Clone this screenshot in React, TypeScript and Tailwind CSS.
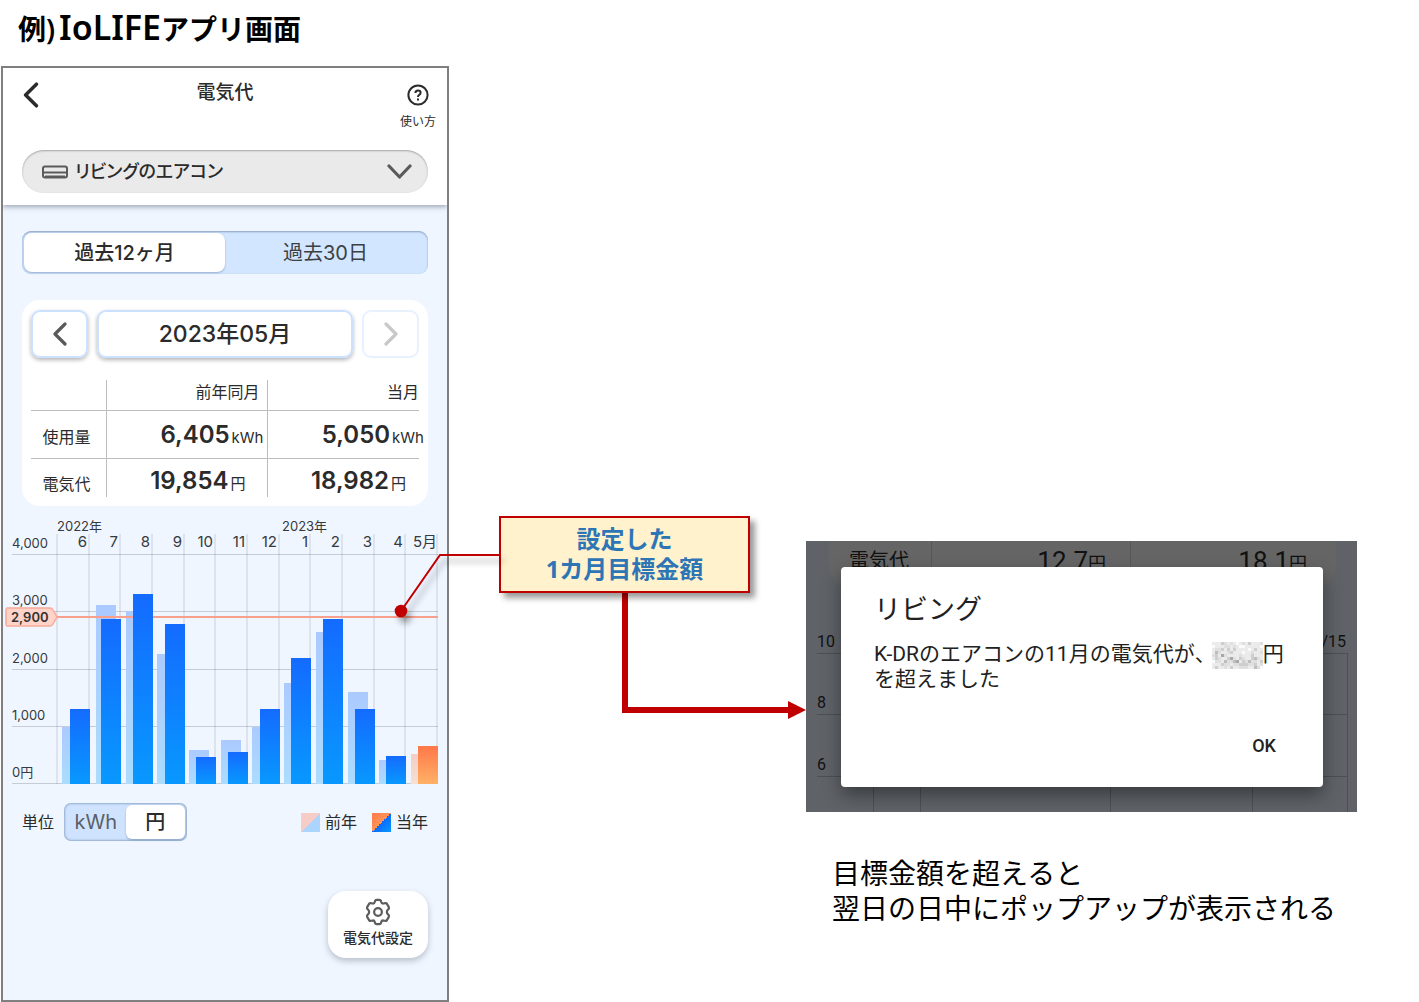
import React from "react";

const BAR_W = 20;

const months = [
  { label: "6", prev: 727, cur: 709, px: 62 },
  { label: "7", prev: 605, cur: 619, px: 96 },
  { label: "8", prev: 611, cur: 594, px: 126 },
  { label: "9", prev: 654, cur: 624, px: 157 },
  { label: "10", prev: 750, cur: 757, px: 189 },
  { label: "11", prev: 740, cur: 752, px: 221 },
  { label: "12", prev: 727, cur: 709, px: 252 },
  { label: "1", prev: 683, cur: 658, px: 284 },
  { label: "2", prev: 632, cur: 619, px: 316 },
  { label: "3", prev: 692, cur: 709, px: 348 },
  { label: "4", prev: 760, cur: 756, px: 379 },
  { label: "5月", prev: 754, cur: 746, px: 411 },
];

const gridX = (i: number) => Math.round(57 + (i * 380) / 12);

const levels = [
  { y: 554, label: "4,000" },
  { y: 611, label: "3,000" },
  { y: 669, label: "2,000" },
  { y: 726, label: "1,000" },
  { y: 783, label: "0円" },
];

function Chart() {
  return (
    <svg viewBox="3 510 444 284" className="block w-full" role="img" aria-label="電気代グラフ">
      <defs>
        <linearGradient id="cur" x1="0" y1="0" x2="0" y2="1">
          <stop offset="0" stopColor="#146bff" />
          <stop offset="1" stopColor="#0898fe" />
        </linearGradient>
        <linearGradient id="prev" x1="0" y1="0" x2="0" y2="1">
          <stop offset="0" stopColor="#abcaff" />
          <stop offset="1" stopColor="#abdcff" />
        </linearGradient>
        <linearGradient id="curHot" x1="0" y1="0" x2="0" y2="1">
          <stop offset="0" stopColor="#ff7849" />
          <stop offset="1" stopColor="#ffb167" />
        </linearGradient>
        <linearGradient id="prevHot" x1="0" y1="0" x2="0" y2="1">
          <stop offset="0" stopColor="#f5cdc6" />
          <stop offset="1" stopColor="#f4e1d2" />
        </linearGradient>
      </defs>
      <g fill="#36393d" fontSize="13">
        <text x="57" y="531">2022年</text>
        <text x="282" y="531">2023年</text>
      </g>
      {Array.from({ length: 13 }, (_, i) => (
        <rect key={i} x={gridX(i) - 1} y="534" width="2" height="250" fill="#202830" fillOpacity="0.09" />
      ))}
      {levels.map((l) => (
        <g key={l.label}>
          <rect x="12" y={l.y} width="426" height="1" fill="#202830" fillOpacity="0.2" />
          <text x="12" y={l.y - 6} fontSize="13" fill="#36393d">
            {l.label}
          </text>
        </g>
      ))}
      {months.map((m, i) => {
        const hot = i === months.length - 1;
        return (
          <g key={m.label}>
            <text x={hot ? 437 : gridX(i + 1) - 2} y="547" fontSize="15" textAnchor="end" fill="#36393d">
              {m.label}
            </text>
            <rect x={m.px} y={m.prev} width={BAR_W} height={784 - m.prev} fill={hot ? "url(#prevHot)" : "url(#prev)"} />
          </g>
        );
      })}
      <rect x="57" y="616" width="381" height="2" fill="#f9a08c" />
      {months.map((m, i) => {
        const hot = i === months.length - 1;
        return (
          <rect
            key={m.label}
            x={gridX(i + 1) + 1 - BAR_W}
            y={m.cur}
            width={BAR_W}
            height={784 - m.cur}
            fill={hot ? "url(#curHot)" : "url(#cur)"}
          />
        );
      })}
      <path d="M7 608 H50 Q52 608 53 610 L57 617 L53 624 Q52 626 50 626 H7 Q6 626 6 624 V610 Q6 608 7 608Z" fill="#ffd3c8" stroke="#f7ab98" strokeWidth="1.5" />
      <text x="11" y="622" fontSize="13" fontWeight="600" fill="#333">
        2,900
      </text>
    </svg>
  );
}

function Gear() {
  return (
    <svg viewBox="0 0 24 24" className="h-7 w-7" fill="none" stroke="#5c5c5c" strokeWidth="1.9" strokeLinejoin="round" strokeLinecap="round">
      <path d="M9.2 3.4 Q9.6 1.6 10.8 1.6 H13.2 Q14.4 1.6 14.8 3.4 Q15.2 4.9 16.6 4.7 Q18.8 4 19.5 4.8 L21.3 7.8 Q21.8 8.9 20.6 9.9 Q19.6 10.8 19.6 12 Q19.6 13.2 20.6 14.1 Q21.8 15.1 21.3 16.2 L19.5 19.2 Q18.8 20 16.6 19.3 Q15.2 19.1 14.8 20.6 Q14.4 22.4 13.2 22.4 H10.8 Q9.6 22.4 9.2 20.6 Q8.8 19.1 7.4 19.3 Q5.2 20 4.5 19.2 L2.7 16.2 Q2.2 15.1 3.4 14.1 Q4.4 13.2 4.4 12 Q4.4 10.8 3.4 9.9 Q2.2 8.9 2.7 7.8 L4.5 4.8 Q5.2 4 7.4 4.7 Q8.8 4.9 9.2 3.4Z" />
      <circle cx="12" cy="12" r="3.3" />
    </svg>
  );
}

function Chevron({ d, color, className }: { d: string; color: string; className: string }) {
  return (
    <svg viewBox="0 0 24 24" className={className} fill="none" stroke={color} strokeWidth="3.2" strokeLinecap="round" strokeLinejoin="round">
      <path d={d} />
    </svg>
  );
}

const LEFT = "M17 2 L7 12 L17 22";
const RIGHT = "M7 2 L17 12 L7 22";

function Value({ n, unit }: { n: string; unit: string }) {
  return (
    <>
      <span className="text-2xl leading-7 font-semibold">{n}</span>
      <span className="ml-[2px] text-[15px] leading-5">{unit}</span>
    </>
  );
}

function Phone() {
  return (
    <section className="flex flex-col overflow-hidden border-2 border-[#7f7f7f] bg-[#eff6ff] font-['Inter','Noto_Sans_CJK_JP',sans-serif] text-[#2b2b2b]">
      <header className="bg-white px-[19px] pb-3 shadow-[0_2px_5px_rgba(80,90,110,0.5)]">
        <div className="-mx-[14px] flex h-[82px] items-start justify-between">
          <button aria-label="戻る" className="mt-[14px] w-12">
            <Chevron d={LEFT} color="#2b2b2b" className="ml-[10px] h-[26px] w-[26px]" />
          </button>
          <h2 className="mt-[11px] text-[19px] leading-7 font-medium">電気代</h2>
          <button className="mt-4 flex w-12 flex-col items-center">
            <svg viewBox="0 0 22 22" className="h-[22px] w-[22px]" fill="none" stroke="#2b2b2b" strokeWidth="2">
              <circle cx="11" cy="11" r="9.6" />
              <path d="M8.4 9 Q8.4 6.4 11 6.4 Q13.6 6.4 13.6 8.7 Q13.6 10 12.2 10.8 Q11 11.5 11 12.9" />
              <path d="M11 14.4 V16.4" />
            </svg>
            <span className="mt-[6px] text-xs leading-5">使い方</span>
          </button>
        </div>
        <button className="flex h-[43px] w-full items-center rounded-full bg-[#eaeaea] pr-4 pl-5 shadow-[inset_0_1px_2px_rgba(0,0,0,0.3)]">
          <svg viewBox="0 0 26 14" className="h-[14px] w-[26px]" fill="none" stroke="#5a5a5a" strokeWidth="2">
            <rect x="1" y="1.5" width="24" height="11" rx="2" />
            <path d="M1.5 7.5 H24.5" />
            <path d="M3 11.5 H23" />
          </svg>
          <span className="ml-[7px] text-lg leading-6 font-medium [font-feature-settings:'palt']">リビングのエアコン</span>
          <svg viewBox="0 0 25 16" className="ml-auto h-4 w-[25px]" fill="none" stroke="#5a5a5a" strokeWidth="3.2" strokeLinecap="round" strokeLinejoin="round">
            <path d="M2 2 L12.5 13 L23 2" />
          </svg>
        </button>
      </header>

      <div className="px-[19px] pt-[26px]">
        <div className="flex h-[43px] rounded-[9px] bg-[#d3e6ff] p-[2px] text-xl shadow-[inset_0_1px_2px_rgba(60,90,130,0.5)]">
          <button className="flex-1 rounded-lg bg-white font-medium shadow-[0_1px_2px_rgba(60,90,130,0.4)]">過去12ヶ月</button>
          <button className="flex-1 text-[#3c4043]">過去30日</button>
        </div>

        <div className="mt-[26px] rounded-[18px] bg-white px-[9px] pt-[10px] pb-[9px]">
          <div className="flex h-12 gap-[9px]">
            <button aria-label="前の月" className="flex w-[57px] items-center justify-center rounded-[9px] border-2 border-[#cbe1ff] shadow-[0_2px_4px_rgba(0,0,0,0.3)]">
              <Chevron d={LEFT} color="#5a5a5a" className="h-6 w-6" />
            </button>
            <button className="flex-1 rounded-[9px] border-2 border-[#cbe1ff] text-[23px] font-medium shadow-[0_2px_4px_rgba(0,0,0,0.3)]">2023年05月</button>
            <button aria-label="次の月" className="flex w-[57px] items-center justify-center rounded-[9px] border-2 border-[#e8f2ff]">
              <Chevron d={RIGHT} color="#c8c8c8" className="h-6 w-6" />
            </button>
          </div>
          <table className="mt-[22px] w-full table-fixed border-collapse text-right">
            <colgroup>
              <col className="w-[75px]" />
              <col />
              <col className="w-[152px]" />
            </colgroup>
            <tbody>
              <tr className="h-[30px] border-b border-[#bdbdbd] text-base">
                <td className="border-r border-[#bdbdbd]" />
                <th scope="col" className="border-r border-[#bdbdbd] pr-[7px] pb-[6px] leading-6 font-normal">前年同月</th>
                <th scope="col" className="pb-[6px] leading-6 font-normal">当月</th>
              </tr>
              <tr className="h-12 border-b border-[#bdbdbd]">
                <th scope="row" className="border-r border-[#bdbdbd] pt-1 pr-[15px] text-base font-normal">使用量</th>
                <td className="border-r border-[#bdbdbd] pr-[3px]"><Value n="6,405" unit="kWh" /></td>
                <td><div className="-mr-[5px]"><Value n="5,050" unit="kWh" /></div></td>
              </tr>
              <tr className="h-[38px]">
                <th scope="row" className="border-r border-[#bdbdbd] pt-3 pr-[15px] text-base leading-6 font-normal">電気代</th>
                <td className="border-r border-[#bdbdbd] pt-2 pr-[21px] leading-7"><Value n="19,854" unit="円" /></td>
                <td className="pt-2 pr-[13px] leading-7"><Value n="18,982" unit="円" /></td>
              </tr>
            </tbody>
          </table>
        </div>
      </div>

      <div className="mt-1">
        <Chart />
      </div>

      <div className="mt-[9px] flex items-center px-[19px] text-base">
        <span>単位</span>
        <div className="ml-[10px] flex h-[38px] w-[123px] rounded-[7px] bg-[#cfe3ff] p-[2px] text-xl shadow-[inset_0_0_2px_1px_rgba(60,90,130,0.4)]">
          <button className="flex-1 text-[#5a5f66]">kWh</button>
          <button className="flex-1 rounded-md bg-white font-medium shadow-[0_1px_2px_rgba(60,90,130,0.4)]">円</button>
        </div>
        <span className="ml-auto h-[19px] w-[19px] bg-[linear-gradient(135deg,#f5cdc6_50%,#abd5ff_50%)]" />
        <span className="ml-[5px]">前年</span>
        <span className="ml-[15px] h-[19px] w-[19px] bg-[linear-gradient(135deg,#ff7849_0%,#ff9558_50%,#0a6cff_50%,#0898fe_100%)]" />
        <span className="ml-[5px]">当年</span>
      </div>

      <button className="mt-[50px] mr-[19px] mb-[42px] ml-auto flex h-[67px] w-[100px] flex-col items-center rounded-[18px] bg-white pt-[7px] text-sm leading-6 font-medium shadow-[0_3px_6px_rgba(80,90,110,0.35)]">
        <Gear />
        電気代設定
      </button>
    </section>
  );
}

function Callout() {
  return (
    <div className="relative ml-[50px] w-[251px] border-2 border-[#c00000] bg-[#fff2cc] pt-[6px] pb-[7px] text-center text-2xl leading-[30px] font-bold text-[#2e75b6] shadow-[5px_5px_6px_rgba(0,0,0,0.4)]">
      設定した
      <br />
      1カ月目標金額
      <svg viewBox="391 540 110 90" className="absolute top-[22px] right-full h-[90px] w-[110px] drop-shadow-[4px_6px_3px_rgba(0,0,0,0.35)]">
        <path d="M500 555 H440 L401 611" fill="none" stroke="#c00000" strokeWidth="2" />
        <circle cx="401" cy="611" r="6.3" fill="#c00000" />
      </svg>
    </div>
  );
}

const MOSAIC = [
  "EEECDEDEFEDECEEED",
  "FEEEDDEDEFFEEEEEF",
  "EDDCECECEEEEFECEE",
  "EBDEEDCEEEFEEDEED",
  "DCEADEEEEDEEECEEE",
  "ECDEECADECDEECBDE",
  "FDDEBDDBAECDBDDEC",
  "EEECDDEDDCCCDDCED",
  "ECEEDECEEDDDEEBDF",
];
const SHADES: Record<string, string> = { A: "#a8a8a8", B: "#bdbdbd", C: "#cecece", D: "#dfdfdf", E: "#ebebeb", F: "#fafafa" };

function Mosaic() {
  return (
    <svg viewBox="0 0 51 27" className="-my-1 inline-block h-[27px] w-[51px] align-middle" shapeRendering="crispEdges">
      {MOSAIC.flatMap((row, y) => row.split("").map((c, x) => <rect key={`${x}-${y}`} x={x * 3} y={y * 3} width="3" height="3" fill={SHADES[c]} />))}
    </svg>
  );
}

function Popup() {
  return (
    <div className="relative h-[271px] overflow-hidden bg-[#5f6368] font-['Roboto','Noto_Sans_CJK_JP',sans-serif]">
      <div className="mr-[21px] ml-[23px] flex h-12 rounded-b-3xl bg-[#656565] pl-5 text-xl leading-10 text-[#111111]">
        <span className="w-[83px] border-r border-[#575757]">電気代</span>
        <span className="flex-1 border-r border-[#575757] pr-6 text-right"><span className="text-[26px] leading-10">12.7</span><span className="text-lg leading-8">円</span></span>
        <span className="w-[205px] pr-[29px] text-right"><span className="text-[26px] leading-10">18.1</span><span className="text-lg leading-8">円</span></span>
      </div>
      <svg viewBox="806 589 551 223" preserveAspectRatio="none" className="block h-[223px] w-full">
        <g stroke="#4c5054" strokeWidth="1">
          <path d="M817 653.5 H1347 M817 714.5 H1347 M817 776.5 H1347" />
          <path d="M873.5 640 V812 M920.5 640 V812 M1110.5 640 V812 M1252.5 640 V812 M1347.5 653 V812" />
        </g>
        <g fontSize="16" fill="#111111">
          <text x="817" y="647">10</text>
          <text x="817" y="708">8</text>
          <text x="817" y="770">6</text>
          <text x="1346" y="647" textAnchor="end">11/15</text>
        </g>
      </svg>
      <div role="dialog" aria-label="リビング" className="absolute top-[26px] right-[34px] bottom-[25px] left-[35px] flex flex-col rounded-sm bg-white px-[33px] pt-6 pb-[27px] text-[#212121] shadow-[0_8px_18px_rgba(0,0,0,0.4)]">
        <h3 className="text-[27px] leading-[38px]">リビング</h3>
        <p className="mt-[13px] text-[21px] leading-[25px]">
          K-DRのエアコンの11月の電気代が<span className="inline-block w-[17px]">、</span><Mosaic />円
          <br />
          を超えました
        </p>
        <button className="mt-auto mr-[14px] ml-auto text-lg leading-7 font-medium">OK</button>
      </div>
    </div>
  );
}

export default function App() {
  return (
    <main className="min-h-screen bg-white pb-px pl-px font-['Noto_Sans','Noto_Sans_CJK_JP',sans-serif] text-black">
      <h1 className="h-[66px] pt-[7px] pl-[17px] text-[28px] leading-10 font-semibold">
        例)<span className="ml-1 text-[34px] leading-10">IoLIFE</span>アプリ画面
      </h1>
      <div className="grid grid-cols-[448fr_357fr_551fr_62fr]">
        <Phone />
        <div className="pt-[450px]">
          <Callout />
          <svg viewBox="622 593 184 127" className="ml-auto block h-[127px] w-[184px]" fill="#c00000">
            <path d="M622 593 H628 V707 H788 V701 L806 710 L788 719 V713 H622Z" />
          </svg>
        </div>
        <div className="pt-[475px]">
          <Popup />
          <p className="mt-[44px] ml-[26px] text-[28px] leading-[35px]">
            目標金額を超えると
            <br />
            翌日の日中にポップアップが表示される
          </p>
        </div>
      </div>
    </main>
  );
}
